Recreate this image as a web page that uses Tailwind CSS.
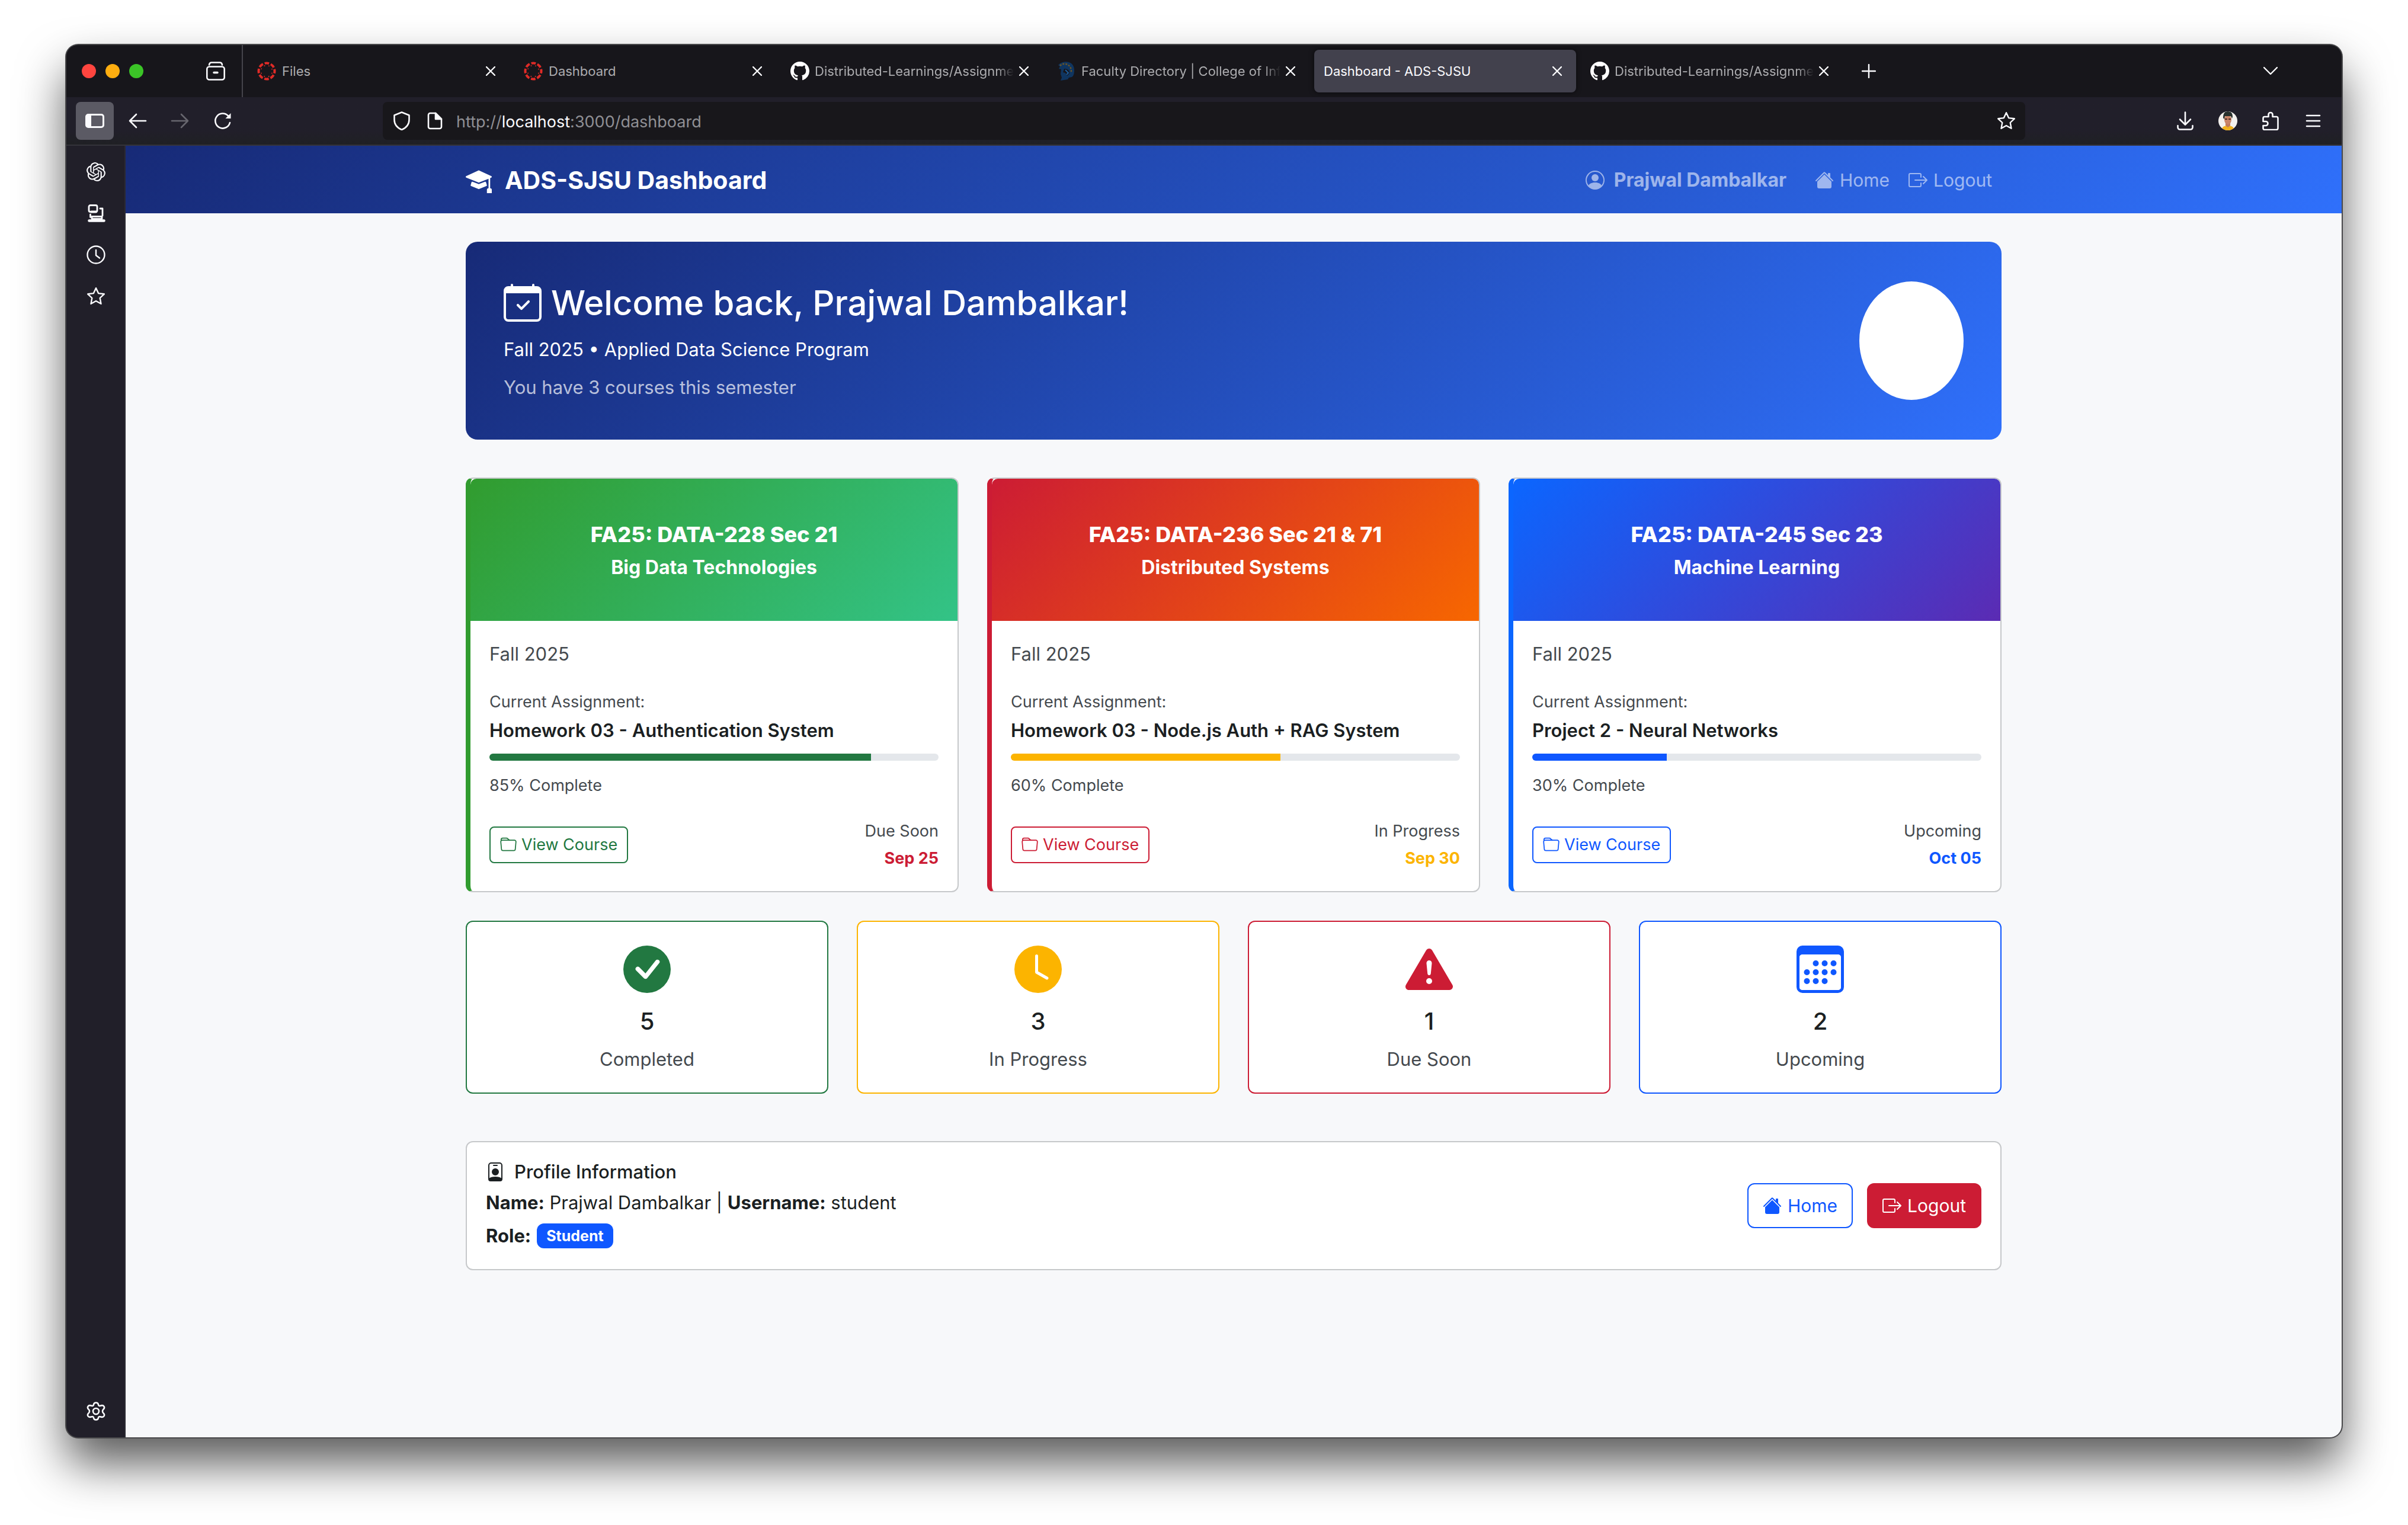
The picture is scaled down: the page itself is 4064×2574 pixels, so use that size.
<!DOCTYPE html>
<html lang="en">
<head>
<meta charset="utf-8">
<meta name="viewport" content="width=device-width, initial-scale=1">
<title>Dashboard - ADS-SJSU</title>
<script src="https://cdn.jsdelivr.net/npm/@tailwindcss/browser@4"></script>
</head>
<body class="flex min-h-screen flex-col bg-white px-28 pt-[76px] pb-[148px] font-['Inter',sans-serif]">

<svg class="hidden" aria-hidden="true">
  <symbol id="i-canvas" viewBox="0 0 32 32"><circle cx="16" cy="16" r="13.5" fill="none" stroke="#e02b27" stroke-width="4" stroke-dasharray="7.6 3" stroke-dashoffset="3.8"/><circle cx="16" cy="16" r="9.6" fill="none" stroke="#e02b27" stroke-width="1.6" stroke-dasharray="1.8 5.74" stroke-dashoffset="-2.8"/></symbol>
  <symbol id="i-github" viewBox="0 0 16 16"><path fill="currentColor" d="M8 0C3.58 0 0 3.58 0 8c0 3.54 2.29 6.53 5.47 7.59.4.07.55-.17.55-.38 0-.19-.01-.82-.01-1.49-2.01.37-2.53-.49-2.69-.94-.09-.23-.48-.94-.82-1.13-.28-.15-.68-.52-.01-.53.63-.01 1.08.58 1.23.82.72 1.21 1.87.87 2.33.66.07-.52.28-.87.51-1.07-1.78-.2-3.64-.89-3.64-3.95 0-.87.31-1.59.82-2.15-.08-.2-.36-1.02.08-2.12 0 0 .67-.21 2.2.82.64-.18 1.32-.27 2-.27s1.36.09 2 .27c1.53-1.04 2.2-.82 2.2-.82.44 1.1.16 1.92.08 2.12.51.56.82 1.27.82 2.15 0 3.07-1.87 3.75-3.65 3.95.29.25.54.73.54 1.48 0 1.07-.01 1.93-.01 2.2 0 .21.15.46.55.38A8.01 8.01 0 0 0 16 8c0-4.42-3.58-8-8-8"/></symbol>
  <symbol id="i-close" viewBox="0 0 16 16"><path d="M1 1l14 14M15 1L1 15" fill="none" stroke="currentColor" stroke-width="2.4" stroke-linecap="round"/></symbol>
  <symbol id="i-star" viewBox="0 0 32 32"><path d="M16 2.2l4.100 8.900 9.700 1.200-7.100 6.700 1.800 9.800L16 24l-8.500 4.800 1.800-9.800-7.100-6.700 9.700-1.200z" fill="none" stroke="currentColor" stroke-width="2.400" stroke-linejoin="round"/></symbol>
  <symbol id="i-person-circle" viewBox="0 0 16 16"><path fill="currentColor" d="M11 6a3 3 0 1 1-6 0 3 3 0 0 1 6 0"/><path fill="currentColor" fill-rule="evenodd" d="M0 8a8 8 0 1 1 16 0A8 8 0 0 1 0 8m8-7a7 7 0 0 0-5.468 11.370C3.242 11.226 4.805 10 8 10s4.757 1.225 5.468 2.370A7 7 0 0 0 8 1"/></symbol>
  <symbol id="i-house" viewBox="0 0 16 16"><path fill="currentColor" d="M8.707 1.5a1 1 0 0 0-1.414 0L.646 8.146a.5.5 0 0 0 .708.708L8 2.207l6.646 6.647a.5.5 0 0 0 .708-.708L13 5.793V2.500a.5.5 0 0 0-.5-.5h-1a.5.5 0 0 0-.5.5v1.293z"/><path fill="currentColor" d="m8 3.293 6 6V13.500a1.500 1.500 0 0 1-1.500 1.500h-9A1.500 1.500 0 0 1 2 13.500V9.293z"/></symbol>
  <symbol id="i-logout" viewBox="0 0 16 16"><path fill="currentColor" fill-rule="evenodd" d="M10 12.5a.5.5 0 0 1-.5.5h-8a.5.5 0 0 1-.5-.5v-9a.5.5 0 0 1 .5-.5h8a.5.5 0 0 1 .5.5v2a.5.5 0 0 0 1 0v-2A1.5 1.5 0 0 0 9.5 2h-8A1.5 1.5 0 0 0 0 3.5v9A1.5 1.5 0 0 0 1.5 14h8a1.5 1.5 0 0 0 1.5-1.5v-2a.5.5 0 0 0-1 0z"/><path fill="currentColor" fill-rule="evenodd" d="M15.854 8.354a.5.5 0 0 0 0-.708l-3-3a.5.5 0 0 0-.708.708L14.293 7.500H5.500a.5.5 0 0 0 0 1h8.793l-2.147 2.146a.5.5 0 0 0 .708.708z"/></symbol>
  <symbol id="i-folder" viewBox="0 0 16 16"><path fill="currentColor" d="M.54 3.870.5 3a2 2 0 0 1 2-2h3.672a2 2 0 0 1 1.414.586l.828.828A2 2 0 0 0 9.828 3h3.982a2 2 0 0 1 1.992 2.181l-.637 7A2 2 0 0 1 13.174 14H2.826a2 2 0 0 1-1.991-1.819l-.637-7a2 2 0 0 1 .342-1.310zM2.190 4a1 1 0 0 0-.996 1.090l.637 7a1 1 0 0 0 .995.910h10.348a1 1 0 0 0 .995-.910l.637-7A1 1 0 0 0 13.810 4zm4.690-1.707A1 1 0 0 0 6.172 2H2.500a1 1 0 0 0-1 .981l.006.139q.323-.119.684-.120h5.396z"/></symbol>
</svg>

<div class="flex flex-1 flex-col overflow-hidden rounded-[20px] bg-[#211f29] ring-2 ring-[#48484a] shadow-[0_44px_80px_rgba(0,0,0,0.65)]">

  <!-- Tab strip -->
  <div class="flex h-[88px] shrink-0 items-center bg-[#17161b] text-[#fbfbfe]">
    <div class="flex w-[236px] items-center gap-4 pl-[26px]">
      <button aria-label="Close window" class="size-6 rounded-full bg-[#ff453f]"></button>
      <button aria-label="Minimize window" class="size-6 rounded-full bg-[#ffae10]"></button>
      <button aria-label="Zoom window" class="size-6 rounded-full bg-[#3bc427]"></button>
    </div>
    <button aria-label="Firefox View" class="flex w-[60px] items-center">
      <svg class="size-8" viewBox="0 0 32 32" fill="none" stroke="currentColor" stroke-width="2.6" stroke-linecap="round"><path d="M5 5.500C5.500 2.500 7 1.500 9 1.500h14c2 0 3.500 1 4 4"/><rect x="1.300" y="8.500" width="29.400" height="22" rx="4"/><path d="M13 18.500h6" stroke-width="3.400"/></svg>
    </button>
    <div class="h-full w-[2px] bg-[#45444b]"></div>
    <div role="tablist" class="ml-2 flex h-[72px] gap-2 text-[22px] text-[#acacaf]">
      <div role="tab" class="flex w-[442px] items-center gap-[10px] pr-6 pl-4">
        <svg class="size-8 shrink-0"><use href="#i-canvas"/></svg>
        <span class="flex-1 whitespace-nowrap">Files</span>
        <button aria-label="Close tab" class="text-[#fbfbfe]"><svg class="size-4"><use href="#i-close"/></svg></button>
      </div>
      <div role="tab" class="flex w-[442px] items-center gap-[10px] pr-6 pl-4">
        <svg class="size-8 shrink-0"><use href="#i-canvas"/></svg>
        <span class="flex-1 whitespace-nowrap">Dashboard</span>
        <button aria-label="Close tab" class="text-[#fbfbfe]"><svg class="size-4"><use href="#i-close"/></svg></button>
      </div>
      <div role="tab" class="flex w-[442px] items-center justify-between pr-6 pl-4">
        <svg class="size-8 shrink-0 text-white"><use href="#i-github"/></svg>
        <span class="w-[336px] shrink-0 whitespace-nowrap [mask-image:linear-gradient(to_left,transparent,black_28px)]">Distributed-Learnings/Assignme</span>
        <button aria-label="Close tab" class="text-[#fbfbfe]"><svg class="size-4"><use href="#i-close"/></svg></button>
      </div>
      <div role="tab" class="flex w-[442px] items-center justify-between pr-6 pl-4">
        <svg class="size-8 shrink-0" viewBox="0 0 32 32"><path d="M2 6C6 1 14-1 20 1c6 2 9 7 9 14 0 5-1 9-4 11l-5 1-2 3-12 2 2-5-2-6 1-8-4-1 2-4z" fill="#0f3560"/><path d="M5 7c5-5 13-4 17 2 2 3 2 7 2 10" fill="none" stroke="#6b5526" stroke-width="2.500" stroke-dasharray="3 2"/><path d="M12 12c6 0 9 3 9 8l-4 4-3-5-4-1z" fill="#17161b"/><path d="M14 14l5 5-3 3" fill="none" stroke="#1c5d9c" stroke-width="2"/></svg>
        <span class="w-[336px] shrink-0 whitespace-nowrap [mask-image:linear-gradient(to_left,transparent,black_28px)]">Faculty Directory | College of Inf</span>
        <button aria-label="Close tab" class="text-[#fbfbfe]"><svg class="size-4"><use href="#i-close"/></svg></button>
      </div>
      <div role="tab" aria-selected="true" class="flex w-[442px] items-center gap-[10px] rounded-lg bg-[#42414d] pr-6 pl-4 text-[#fbfbfe] shadow-[0_0_8px_rgba(0,0,0,0.6)]">
        <span class="flex-1 whitespace-nowrap">Dashboard - ADS-SJSU</span>
        <button aria-label="Close tab"><svg class="size-4"><use href="#i-close"/></svg></button>
      </div>
      <div role="tab" class="flex w-[442px] items-center justify-between pr-6 pl-4">
        <svg class="size-8 shrink-0 text-white"><use href="#i-github"/></svg>
        <span class="w-[336px] shrink-0 whitespace-nowrap [mask-image:linear-gradient(to_left,transparent,black_28px)]">Distributed-Learnings/Assignme</span>
        <button aria-label="Close tab" class="text-[#fbfbfe]"><svg class="size-4"><use href="#i-close"/></svg></button>
      </div>
    </div>
    <button aria-label="New tab" class="ml-8"><svg class="size-6" viewBox="0 0 24 24" fill="none" stroke="currentColor" stroke-width="2.400" stroke-linecap="round"><path d="M12 1v22M1 12h22"/></svg></button>
    <button aria-label="List all tabs" class="mr-[108px] ml-auto"><svg class="size-6" viewBox="0 0 24 24" fill="none" stroke="currentColor" stroke-width="2.400" stroke-linecap="round" stroke-linejoin="round"><path d="M1 6l11 11L23 6"/></svg></button>
  </div>

  <!-- Navigation toolbar -->
  <div class="flex h-[82px] shrink-0 items-center border-b-2 border-[#34333a] bg-linear-to-b from-[#211f2a] from-70% to-[#1f2024] pr-8 pl-4 text-[#fbfbfe]">
    <div class="flex w-[518px] items-center">
      <button aria-label="Show sidebar" class="flex size-16 items-center justify-center rounded-lg bg-[#5b5a64]"><svg class="size-8" viewBox="0 0 32 32"><rect x="1.500" y="5.500" width="29" height="21" rx="3.500" fill="none" stroke="currentColor" stroke-width="3"/><path d="M3 5h7v22H3z" fill="currentColor"/></svg></button>
      <button aria-label="Back" class="ml-6"><svg class="size-8" viewBox="0 0 32 32" fill="none" stroke="currentColor" stroke-width="2.600" stroke-linecap="round" stroke-linejoin="round"><path d="M30 16H3M14 5L3 16l11 11"/></svg></button>
      <button aria-label="Forward" disabled class="ml-10 text-[#67666e]"><svg class="size-8" viewBox="0 0 32 32" fill="none" stroke="currentColor" stroke-width="2.600" stroke-linecap="round" stroke-linejoin="round"><path d="M2 16h27M18 5l11 11-11 11"/></svg></button>
      <button aria-label="Reload" class="ml-10"><svg class="size-8" viewBox="0 0 32 32" fill="none" stroke="currentColor" stroke-width="2.600" stroke-linecap="round"><path d="M28 19a12.500 12.500 0 1 1-3-11.500"/><path d="M29.500 3v9h-9z" fill="currentColor" stroke="none"/></svg></button>
    </div>
    <div class="flex h-16 flex-1 items-center rounded-lg bg-[#18171b] px-4">
      <svg class="size-8" viewBox="0 0 32 32" fill="none" stroke="currentColor" stroke-width="2.600" stroke-linejoin="round"><path d="M16 1.500l12.500 5V14c0 8-4.500 13.500-12.500 17C8 27.500 3.500 22 3.500 14V6.500z"/></svg>
      <svg class="ml-6 size-8" viewBox="0 0 32 32" fill="none" stroke="currentColor" stroke-width="2.600" stroke-linejoin="round"><path d="M17 3H8a3 3 0 0 0-3 3v20a3 3 0 0 0 3 3h16a3 3 0 0 0 3-3V13z"/><path d="M17 3v10h10z" fill="currentColor"/></svg>
      <div role="textbox" aria-label="Address" class="ml-5 flex-1 pt-1 text-[27px] leading-8 text-[#8f8f94]">http://<span class="text-[#fbfbfe]">localhost</span>:3000/dashboard</div>
      <button aria-label="Bookmark this page"><svg class="size-8"><use href="#i-star"/></svg></button>
    </div>
    <div class="flex w-[502px] items-center justify-end gap-10">
      <button aria-label="Downloads"><svg class="size-8" viewBox="0 0 32 32" fill="none" stroke="currentColor" stroke-width="2.600" stroke-linecap="round" stroke-linejoin="round"><path d="M16 1.500V22M7 13.500l9 9 9-9M3.500 24v3a3.500 3.500 0 0 0 3.500 3.500h18a3.500 3.500 0 0 0 3.500-3.500v-3"/></svg></button>
      <button aria-label="Account"><svg class="size-8" viewBox="0 0 32 32"><clipPath id="av"><circle cx="16" cy="16" r="16"/></clipPath><g clip-path="url(#av)"><path fill="#f4f1ee" d="M0 0h32v32H0z"/><path d="M5 32c1-6 5-8 11-8s10 2 11 8z" fill="#f0b01c"/><path d="M12 18h8v6l-4 3-4-3z" fill="#c07a5e"/><ellipse cx="16" cy="14" rx="6" ry="8" fill="#c98468"/><path d="M8 11C8 3 11 0 16 0s8 3 8 9l-1 3-2-4H11l-1 5z" fill="#27302d"/><path d="M11 13h4M17 13h4" stroke="#4c2c26" stroke-width="2"/></g></svg></button>
      <button aria-label="Extensions"><svg class="size-8" viewBox="0 0 32 32" fill="none" stroke="currentColor" stroke-width="2.600" stroke-linejoin="round"><path d="M12.500 9V5.500a3.500 3.500 0 0 1 7 0V9H26a2.500 2.500 0 0 1 2.500 2.500v17A2.500 2.500 0 0 1 26 31H6a2.500 2.500 0 0 1-2.500-2.500V24H8a3.500 3.500 0 0 0 0-7H3.500v-5.500A2.500 2.500 0 0 1 6 9z"/></svg></button>
      <button aria-label="Menu"><svg class="size-8" viewBox="0 0 32 32" fill="none" stroke="currentColor" stroke-width="2.600" stroke-linecap="round"><path d="M5 7h22M5 16h22M5 25h22"/></svg></button>
    </div>
  </div>

  <div class="flex flex-1">
    <!-- Browser sidebar -->
    <aside class="flex w-[100px] shrink-0 flex-col items-center gap-[38px] border-r-2 border-[#2b2a33] pt-7 pb-7 pl-[2px] text-[#fbfbfe]">
      <button aria-label="AI chatbot"><svg class="size-8" viewBox="0 0 24 24" fill="currentColor"><path d="M22.2819 9.8211a5.9847 5.9847 0 0 0-.5157-4.9108 6.0462 6.0462 0 0 0-6.5098-2.9A6.0651 6.0651 0 0 0 4.9807 4.1818a5.9847 5.9847 0 0 0-3.9977 2.9 6.0462 6.0462 0 0 0 .7427 7.0966 5.98 5.98 0 0 0 .511 4.9107 6.051 6.051 0 0 0 6.5146 2.9001A5.9847 5.9847 0 0 0 13.2599 24a6.0557 6.0557 0 0 0 5.7718-4.2058 5.9894 5.9894 0 0 0 3.9977-2.9001 6.0557 6.0557 0 0 0-.7475-7.0729zm-9.022 12.6081a4.4755 4.4755 0 0 1-2.8764-1.0408l.1419-.0804 4.7783-2.7582a.7948.7948 0 0 0 .3927-.6813v-6.7369l2.02 1.1686a.071.071 0 0 1 .038.052v5.5826a4.504 4.504 0 0 1-4.4945 4.4944zm-9.6607-4.1254a4.4708 4.4708 0 0 1-.5346-3.0137l.142.0852 4.783 2.7582a.7712.7712 0 0 0 .7806 0l5.8428-3.3685v2.3324a.0804.0804 0 0 1-.0332.0615L9.74 19.9502a4.4992 4.4992 0 0 1-6.1408-1.6464zM2.3408 7.8956a4.485 4.485 0 0 1 2.3655-1.9728V11.6a.7664.7664 0 0 0 .3879.6765l5.8144 3.3543-2.0201 1.1685a.0757.0757 0 0 1-.071 0l-4.8303-2.7865A4.504 4.504 0 0 1 2.3408 7.872zm16.5963 3.8558L13.1038 8.364 15.1192 7.2a.0757.0757 0 0 1 .071 0l4.8303 2.7913a4.4944 4.4944 0 0 1-.6765 8.1042v-5.6772a.79.79 0 0 0-.407-.667zm2.0107-3.0231l-.142-.0852-4.7735-2.7818a.7759.7759 0 0 0-.7854 0L9.409 9.2297V6.8974a.0662.0662 0 0 1 .0284-.0615l4.8303-2.7866a4.4992 4.4992 0 0 1 6.6802 4.66zM8.3065 12.863l-2.02-1.1638a.0804.0804 0 0 1-.038-.0567V6.0742a4.4992 4.4992 0 0 1 7.3757-3.4537l-.142.0805L8.704 5.459a.7948.7948 0 0 0-.3927.6813zm1.0976-2.3654l2.602-1.4998 2.6069 1.4998v2.9994l-2.5974 1.4997-2.6067-1.4997Z"/></svg></button>
      <button aria-label="Synced tabs"><svg class="size-8" viewBox="0 0 32 32" fill="none" stroke="currentColor" stroke-width="2.800" stroke-linejoin="round" stroke-linecap="round"><rect x="4" y="2.500" width="14" height="11" rx="2.500"/><path d="M8 13.500h8" stroke-width="4"/><path d="M23 8h4v12M6.500 18v4.500"/><path d="M9 21.500h17v4H9z"/><path d="M4.500 28.500h25" stroke-width="4.500"/></svg></button>
      <button aria-label="History"><svg class="size-8" viewBox="0 0 32 32" fill="none" stroke="currentColor" stroke-width="2.400" stroke-linecap="round" stroke-linejoin="round"><circle cx="16" cy="16" r="14.500"/><path d="M16 8v9l6 4.500"/></svg></button>
      <button aria-label="Bookmarks"><svg class="size-8"><use href="#i-star"/></svg></button>
      <button aria-label="Customize sidebar" class="mt-auto"><svg class="size-8" viewBox="0 0 32 32" fill="none" stroke="currentColor" stroke-width="2.600" stroke-linejoin="round"><path d="M16 1.500c2.500 0 3.700 1.500 4 3.200.3 2 1.300 2.600 3.200 2 3-1 5.300-.5 6.300 1.200 1.100 2 .4 3.800-1.200 5.100-1.700 1.400-1.700 4.600 0 6 1.600 1.300 2.300 3.100 1.200 5.100-1 1.700-3.300 2.200-6.300 1.200-1.900-.6-2.900 0-3.200 2-.3 1.700-1.500 3.200-4 3.200s-3.700-1.500-4-3.200c-.3-2-1.300-2.600-3.200-2-3 1-5.300.5-6.300-1.200-1.100-2-.4-3.800 1.200-5.100 1.700-1.400 1.700-4.600 0-6C2.100 11.700 1.400 9.900 2.500 7.900c1-1.700 3.300-2.200 6.300-1.200 1.900.6 2.900 0 3.200-2 .3-1.700 1.500-3.200 4-3.200z"/><circle cx="16" cy="16" r="5"/></svg></button>
    </aside>

    <!-- Web page -->
    <div class="flex-1 bg-[#f7f8fa] text-[31px] leading-[48px] text-[#1b1f22]">
      <nav class="bg-[linear-gradient(135deg,#172a77,#2f70fb)]">
        <div class="mx-auto flex h-[114px] max-w-[2640px] items-center justify-between px-6 pt-[2px]">
          <a href="#" class="flex items-center gap-[22px] text-[41px] font-bold text-white">
            <svg class="size-11" viewBox="0 0 16 16" fill="currentColor"><path d="M8.211 2.047a.5.5 0 0 0-.422 0l-7.500 3.500a.5.5 0 0 0 .025.917l7.500 3a.5.5 0 0 0 .372 0L14 7.140V13a1 1 0 0 0-1 1v2h3v-2a1 1 0 0 0-1-1V6.739l.686-.275a.5.5 0 0 0 .025-.917z"/><path d="M4.176 9.032a.5.5 0 0 0-.656.327l-.5 1.700a.5.5 0 0 0 .294.605l4.500 1.800a.5.5 0 0 0 .372 0l4.500-1.800a.5.5 0 0 0 .294-.605l-.5-1.700a.5.5 0 0 0-.656-.327L8 10.466z"/></svg>
            ADS-SJSU Dashboard
          </a>
          <div class="flex items-center gap-8 pr-4 text-[30px] text-white/55">
            <span class="mr-4 flex items-center gap-4 text-[32px] font-bold"><svg class="size-8"><use href="#i-person-circle"/></svg>Prajwal Dambalkar</span>
            <a href="#" class="flex items-center gap-[10px]"><svg class="size-8"><use href="#i-house"/></svg>Home</a>
            <a href="#" class="flex items-center gap-[10px]"><svg class="size-8"><use href="#i-logout"/></svg>Logout</a>
          </div>
        </div>
      </nav>

      <main class="mx-auto max-w-[2640px] px-6 pt-12 pb-16">
        <section class="flex items-center justify-between rounded-[20px] bg-[linear-gradient(135deg,#172a77,#2f70fb)] p-16 text-white">
          <div>
            <h1 class="flex items-center gap-4 text-[58px] leading-[78px] font-medium">
              <svg class="size-16" viewBox="0 0 16 16" fill="currentColor"><path d="M10.854 7.146a.5.5 0 0 1 0 .708l-3 3a.5.5 0 0 1-.708 0l-1.500-1.500a.5.5 0 1 1 .708-.708L7.500 9.793l2.646-2.647a.5.5 0 0 1 .708 0"/><path d="M3.500 0a.5.5 0 0 1 .5.5V1h8V.5a.5.5 0 0 1 1 0V1h1a2 2 0 0 1 2 2v11a2 2 0 0 1-2 2H2a2 2 0 0 1-2-2V3a2 2 0 0 1 2-2h1V.5a.5.5 0 0 1 .5-.5M1 4v10a1 1 0 0 0 1 1h12a1 1 0 0 0 1-1V4z"/></svg>
              Welcome back, Prajwal Dambalkar!
            </h1>
            <p class="mt-4">Fall 2025 • Applied Data Science Program</p>
            <p class="mt-4 text-white/70">You have 3 courses this semester</p>
          </div>
          <div class="-my-4 h-[200px] w-44 rounded-[50%] bg-white"></div>
        </section>

        <section class="mt-16 grid grid-cols-3 gap-12">
          <article class="rounded-xl border-2 border-l-8 border-[#c6c8ca] border-l-[#319c2f] bg-white">
            <header class="flex h-60 flex-col items-center justify-center rounded-t-[10px] bg-[linear-gradient(135deg,#319c2f,#33c387)] pt-1 leading-[56px] text-white">
              <h2 class="text-[36px] font-extrabold">FA25: DATA-228 Sec 21</h2>
              <p class="text-[32px] font-bold">Big Data Technologies</p>
            </header>
            <div class="p-8">
              <p class="text-[#44494e]">Fall 2025</p>
              <p class="mt-8 text-[27px] leading-[50px] text-[#44494e]">Current Assignment:</p>
              <h3 class="leading-[46px] font-semibold">Homework 03 - Authentication System</h3>
              <div role="progressbar" aria-valuenow="85" aria-valuemin="0" aria-valuemax="100" aria-label="Assignment progress" class="mt-4 h-3 overflow-hidden rounded-md bg-[#e4e7eb]"><div class="h-full bg-[#227841]" style="width:85%"></div></div>
              <p class="mt-4 text-[27px] leading-[52px] text-[#44494e]">85% Complete</p>
              <div class="mt-7 flex items-center justify-between">
                <button class="flex h-[62px] items-center gap-2 rounded-lg border-2 border-[#227841] px-4 text-[27px] text-[#227841]"><svg class="size-7"><use href="#i-folder"/></svg>View Course</button>
                <div class="text-right text-[27px] leading-[46px]"><p class="text-[#44494e]">Due Soon</p><p class="font-bold text-[#cc1c34]">Sep 25</p></div>
              </div>
            </div>
          </article>

          <article class="rounded-xl border-2 border-l-8 border-[#c6c8ca] border-l-[#cc1c34] bg-white">
            <header class="flex h-60 flex-col items-center justify-center rounded-t-[10px] bg-[linear-gradient(135deg,#cc1c34,#f76700)] pt-1 leading-[56px] text-white">
              <h2 class="text-[36px] font-extrabold">FA25: DATA-236 Sec 21 &amp; 71</h2>
              <p class="text-[32px] font-bold">Distributed Systems</p>
            </header>
            <div class="p-8">
              <p class="text-[#44494e]">Fall 2025</p>
              <p class="mt-8 text-[27px] leading-[50px] text-[#44494e]">Current Assignment:</p>
              <h3 class="leading-[46px] font-semibold">Homework 03 - Node.js Auth + RAG System</h3>
              <div role="progressbar" aria-valuenow="60" aria-valuemin="0" aria-valuemax="100" aria-label="Assignment progress" class="mt-4 h-3 overflow-hidden rounded-md bg-[#e4e7eb]"><div class="h-full bg-[#fcb400]" style="width:60%"></div></div>
              <p class="mt-4 text-[27px] leading-[52px] text-[#44494e]">60% Complete</p>
              <div class="mt-7 flex items-center justify-between">
                <button class="flex h-[62px] items-center gap-2 rounded-lg border-2 border-[#cc1c34] px-4 text-[27px] text-[#cc1c34]"><svg class="size-7"><use href="#i-folder"/></svg>View Course</button>
                <div class="text-right text-[27px] leading-[46px]"><p class="text-[#44494e]">In Progress</p><p class="font-bold text-[#fcb400]">Sep 30</p></div>
              </div>
            </div>
          </article>

          <article class="rounded-xl border-2 border-l-8 border-[#c6c8ca] border-l-[#0b66ff] bg-white">
            <header class="flex h-60 flex-col items-center justify-center rounded-t-[10px] bg-[linear-gradient(135deg,#0b66ff,#5b2bb3)] pt-1 leading-[56px] text-white">
              <h2 class="text-[36px] font-extrabold">FA25: DATA-245 Sec 23</h2>
              <p class="text-[32px] font-bold">Machine Learning</p>
            </header>
            <div class="p-8">
              <p class="text-[#44494e]">Fall 2025</p>
              <p class="mt-8 text-[27px] leading-[50px] text-[#44494e]">Current Assignment:</p>
              <h3 class="leading-[46px] font-semibold">Project 2 - Neural Networks</h3>
              <div role="progressbar" aria-valuenow="30" aria-valuemin="0" aria-valuemax="100" aria-label="Assignment progress" class="mt-4 h-3 overflow-hidden rounded-md bg-[#e4e7eb]"><div class="h-full bg-[#0f57ff]" style="width:30%"></div></div>
              <p class="mt-4 text-[27px] leading-[52px] text-[#44494e]">30% Complete</p>
              <div class="mt-7 flex items-center justify-between">
                <button class="flex h-[62px] items-center gap-2 rounded-lg border-2 border-[#0f57ff] px-4 text-[27px] text-[#0f57ff]"><svg class="size-7"><use href="#i-folder"/></svg>View Course</button>
                <div class="text-right text-[27px] leading-[46px]"><p class="text-[#44494e]">Upcoming</p><p class="font-bold text-[#0f57ff]">Oct 05</p></div>
              </div>
            </div>
          </article>
        </section>

        <section class="mt-12 grid grid-cols-4 gap-12">
          <div class="flex flex-col items-center rounded-xl border-2 border-[#227841] bg-white pt-10 pb-8">
            <svg class="size-20 text-[#227841]" viewBox="0 0 16 16" fill="currentColor"><path d="M16 8A8 8 0 1 1 0 8a8 8 0 0 1 16 0m-3.970-3.030a.75.75 0 0 0-1.080.022L7.477 9.417 5.384 7.323a.75.75 0 0 0-1.060 1.060L6.970 11.030a.75.75 0 0 0 1.079-.020l3.992-4.990a.75.75 0 0 0-.010-1.050z"/></svg>
            <p class="mt-6 text-[40px] font-medium">5</p>
            <p class="mt-4 text-[#44494e]">Completed</p>
          </div>
          <div class="flex flex-col items-center rounded-xl border-2 border-[#fcb400] bg-white pt-10 pb-8">
            <svg class="size-20 text-[#fcb400]" viewBox="0 0 16 16" fill="currentColor"><path d="M16 8A8 8 0 1 1 0 8a8 8 0 0 1 16 0M8 3.500a.5.5 0 0 0-1 0V9a.5.5 0 0 0 .252.434l3.500 2a.5.5 0 0 0 .496-.868L8 8.710z"/></svg>
            <p class="mt-6 text-[40px] font-medium">3</p>
            <p class="mt-4 text-[#44494e]">In Progress</p>
          </div>
          <div class="flex flex-col items-center rounded-xl border-2 border-[#cc1c34] bg-white pt-10 pb-8">
            <svg class="size-20 text-[#cc1c34]" viewBox="0 0 16 16" fill="currentColor"><path d="M8.982 1.566a1.130 1.130 0 0 0-1.960 0L.165 13.233c-.457.778.091 1.767.980 1.767h13.713c.889 0 1.438-.990.980-1.767zM8 5c.535 0 .954.462.900.995l-.350 3.507a.552.552 0 0 1-1.100 0L7.100 5.995A.905.905 0 0 1 8 5m.002 6a1 1 0 1 1 0 2 1 1 0 0 1 0-2"/></svg>
            <p class="mt-6 text-[40px] font-medium">1</p>
            <p class="mt-4 text-[#44494e]">Due Soon</p>
          </div>
          <div class="flex flex-col items-center rounded-xl border-2 border-[#0f57ff] bg-white pt-10 pb-8">
            <svg class="size-20 text-[#0f57ff]" viewBox="0 0 16 16" fill="currentColor"><path d="M14 0H2a2 2 0 0 0-2 2v12a2 2 0 0 0 2 2h12a2 2 0 0 0 2-2V2a2 2 0 0 0-2-2M1 3.857C1 3.384 1.448 3 2 3h12c.552 0 1 .384 1 .857v10.286c0 .473-.448.857-1 .857H2c-.552 0-1-.384-1-.857z"/><path d="M6.500 7a1 1 0 1 0 0-2 1 1 0 0 0 0 2m3 0a1 1 0 1 0 0-2 1 1 0 0 0 0 2m3 0a1 1 0 1 0 0-2 1 1 0 0 0 0 2m-9 3a1 1 0 1 0 0-2 1 1 0 0 0 0 2m3 0a1 1 0 1 0 0-2 1 1 0 0 0 0 2m3 0a1 1 0 1 0 0-2 1 1 0 0 0 0 2m3 0a1 1 0 1 0 0-2 1 1 0 0 0 0 2m-9 3a1 1 0 1 0 0-2 1 1 0 0 0 0 2m3 0a1 1 0 1 0 0-2 1 1 0 0 0 0 2m3 0a1 1 0 1 0 0-2 1 1 0 0 0 0 2"/></svg>
            <p class="mt-6 text-[40px] font-medium">2</p>
            <p class="mt-4 text-[#44494e]">Upcoming</p>
          </div>
        </section>

        <section class="mt-20 flex items-center justify-between rounded-xl border-2 border-[#c6c8ca] bg-white p-8">
          <div>
            <h2 class="flex items-center gap-4 leading-9 font-medium"><svg class="size-8" viewBox="0 0 16 16" fill="currentColor"><path d="M6.500 2a.5.5 0 0 0 0 1h3a.5.5 0 0 0 0-1zM11 8a3 3 0 1 1-6 0 3 3 0 0 1 6 0"/><path d="M4.500 0A2.500 2.500 0 0 0 2 2.500V14a2 2 0 0 0 2 2h8a2 2 0 0 0 2-2V2.500A2.500 2.500 0 0 0 11.500 0zM3 2.500A1.500 1.500 0 0 1 4.500 1h7A1.500 1.500 0 0 1 13 2.500v10.795a4.200 4.200 0 0 0-.776-.492C11.392 12.387 10.063 12 8 12s-3.392.387-4.224.803a4.200 4.200 0 0 0-.776.492z"/></svg>Profile Information</h2>
            <p class="mt-2 leading-[52px]"><strong>Name:</strong> Prajwal Dambalkar | <strong>Username:</strong> student</p>
            <p class="mt-[6px] flex items-center gap-[10px]"><strong>Role:</strong> <span class="rounded-xl bg-[#0f57ff] px-4 text-[25px] leading-[42px] font-bold text-white">Student</span></p>
          </div>
          <div class="flex gap-6">
            <a href="#" class="flex h-[76px] items-center gap-[10px] rounded-xl border-2 border-[#0f57ff] px-6 text-[30px] text-[#0f57ff]"><svg class="size-8"><use href="#i-house"/></svg>Home</a>
            <a href="#" class="flex h-[76px] items-center gap-[10px] rounded-xl border-2 border-[#cc1c34] bg-[#cc1c34] px-6 text-[30px] text-white"><svg class="size-8"><use href="#i-logout"/></svg>Logout</a>
          </div>
        </section>
      </main>
    </div>
  </div>
</div>
</body>
</html>
